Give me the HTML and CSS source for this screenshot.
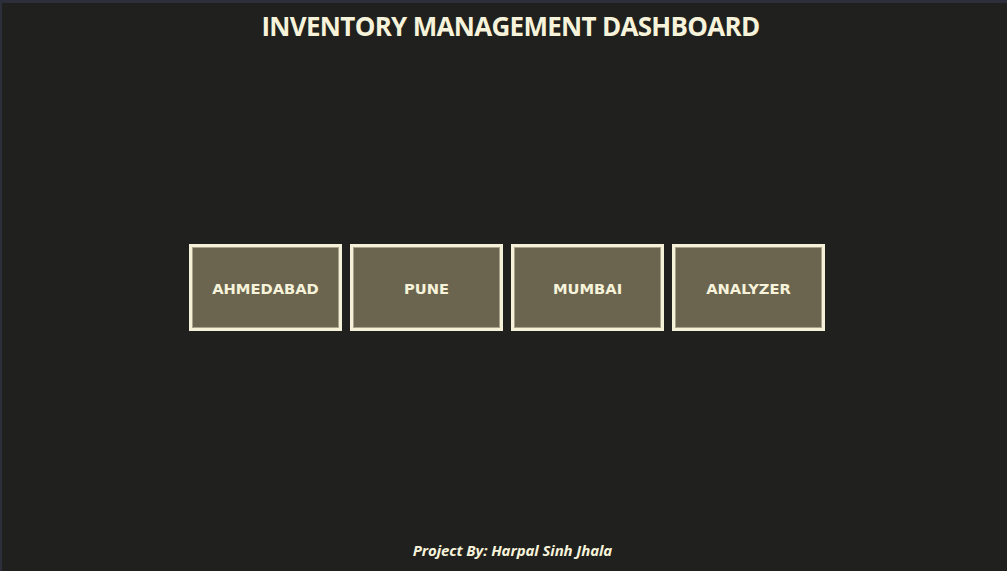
FILE: index.html
```html
<!DOCTYPE html>
<html>
<head>
<meta charset="utf-8">
<link rel="stylesheet" href="styles.css">
</head>
<body>
<div class="frame">
  <h1 class="title">INVENTORY MANAGEMENT DASHBOARD</h1>
  <div class="buttons">
    <div class="btn">AHMEDABAD</div>
    <div class="btn">PUNE</div>
    <div class="btn">MUMBAI</div>
    <div class="btn">ANALYZER</div>
  </div>
  <div class="footer">Project By: Harpal Sinh Jhala</div>
</div>
</body>
</html>
```
FILE: styles.css
```css
html, body {
  margin: 0;
  padding: 0;
  background: #20201e;
}
.frame {
  box-sizing: border-box;
  height: 571px;
  border-top: 3px solid #2c2e3b;
  border-left: 2px solid #2c2e3b;
  display: flex;
  flex-direction: column;
  align-items: center;
}
.title {
  margin: 8px 0 0 12px;
  font-family: "Open Sans", "Noto Sans", sans-serif;
  font-weight: 700;
  font-size: 26px;
  letter-spacing: -0.7px;
  line-height: 30px;
  color: #f6f3da;
}
.buttons {
  margin-top: 203px;
  margin-left: 5px;
  display: flex;
  gap: 8px;
}
.btn {
  box-sizing: border-box;
  width: 153px;
  height: 87px;
  background: #6b6550;
  border: 3px solid #f4f1d8;
  box-shadow: inset 0 0 0 1px #a9a38c;
  display: flex;
  align-items: center;
  justify-content: center;
  padding-top: 2px;
  font-family: "DejaVu Sans", Verdana, sans-serif;
  font-weight: 700;
  font-size: 14.7px;
  color: #f6f3da;
}
.footer {
  margin-top: auto;
  margin-bottom: 11px;
  margin-left: 16px;
  font-family: "Open Sans", "Noto Sans", sans-serif;
  font-weight: 700;
  font-style: italic;
  font-size: 15px;
  letter-spacing: -0.1px;
  color: #f6f3da;
}
```
